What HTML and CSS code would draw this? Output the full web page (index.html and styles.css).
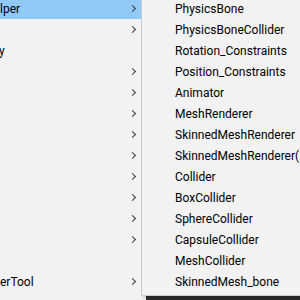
FILE: index.html
```html
<!DOCTYPE html>
<html lang="en">
<head>
    <meta charset="UTF-8">
    <title>Context Menu</title>
    <link rel="stylesheet" href="styles.css">
</head>
<body>
    <div class="desktop">
        <div class="menu">
            <div class="item active"><span class="label">lper</span><span class="arrow"></span></div>
            <div class="item"><span class="label"></span><span class="arrow"></span></div>
            <div class="item"><span class="label clip">y</span></div>
            <div class="item"><span class="label"></span><span class="arrow"></span></div>
            <div class="item"><span class="label"></span><span class="arrow"></span></div>
            <div class="item"><span class="label"></span><span class="arrow"></span></div>
            <div class="item"><span class="label"></span><span class="arrow"></span></div>
            <div class="item"><span class="label"></span><span class="arrow"></span></div>
            <div class="item"><span class="label"></span><span class="arrow"></span></div>
            <div class="item"><span class="label"></span><span class="arrow"></span></div>
            <div class="item"><span class="label"></span><span class="arrow"></span></div>
            <div class="item"><span class="label"></span><span class="arrow"></span></div>
            <div class="item"><span class="label"></span></div>
            <div class="item"><span class="label">erTool</span><span class="arrow"></span></div>
        </div>
        <div class="submenu">
            <div class="item">PhysicsBone</div>
            <div class="item">PhysicsBoneCollider</div>
            <div class="item">Rotation_Constraints</div>
            <div class="item">Position_Constraints</div>
            <div class="item">Animator</div>
            <div class="item">MeshRenderer</div>
            <div class="item">SkinnedMeshRenderer</div>
            <div class="item">SkinnedMeshRenderer(PhysBone)</div>
            <div class="item">Collider</div>
            <div class="item">BoxCollider</div>
            <div class="item">SphereCollider</div>
            <div class="item">CapsuleCollider</div>
            <div class="item">MeshCollider</div>
            <div class="item">SkinnedMesh_bone</div>
        </div>
    </div>
</body>
</html>
```

FILE: styles.css
```css
body { margin: 0; overflow: hidden; background-color: #2b2b2b; }
.desktop {
    display: flex;
    width: 300px;
    height: 300px;
    overflow: hidden;
    font-family: Roboto, sans-serif;
    font-size: 12px;
    color: #000;
}
.menu {
    flex: 0 0 146px;
    background: #f2f2f2;
    margin-top: -2px;
    height: 302px;
}
.menu .item {
    display: flex;
    align-items: center;
    justify-content: space-between;
    height: 21px;
    padding-right: 10px;
}
.menu .item.active {
    background: #91c9f7;
}
.menu .label {
    padding-top: 1px;
}
.menu .label.clip {
    margin-left: -1px;
}
.arrow {
    width: 4px;
    height: 4px;
    border-right: 1.3px solid #3c3c3c;
    border-bottom: 1.3px solid #3c3c3c;
    transform: rotate(-45deg);
    margin-right: 1px;
}
.submenu {
    position: relative;
    z-index: 2;
    margin-left: -5px;
    margin-top: -1px;
    flex: 0 0 240px;
    align-self: flex-start;
    background: #f2f2f2;
    border-left: 1px solid #cccccc;
    border-bottom: 1px solid #cccccc;
    padding-bottom: 2px;
    box-shadow: 2px 2px 2px rgba(0,0,0,0.15);
}
.submenu .item {
    height: 21px;
    line-height: 21px;
    padding-left: 33px;
    white-space: nowrap;
}
```
